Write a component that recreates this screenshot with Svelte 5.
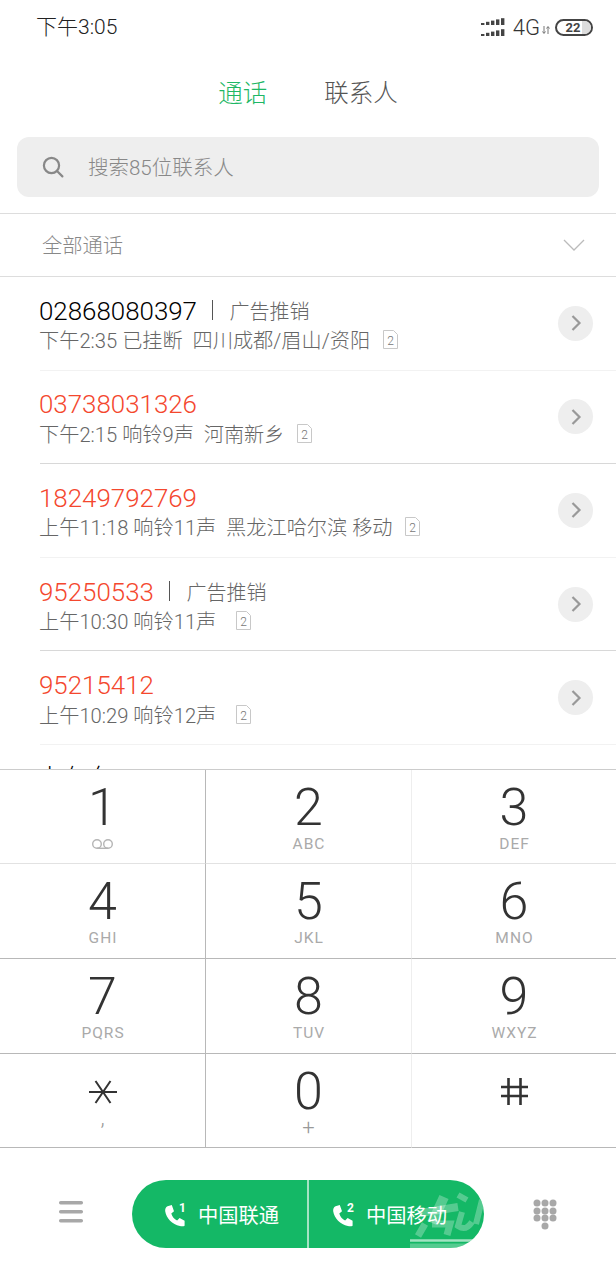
<script>
	const calls = [
		{ num: '02868080397', tag: '广告推销', info: '下午2:35 已挂断  四川成都/眉山/资阳', gap: 12, line: 'faint' },
		{ num: '03738031326', missed: true, info: '下午2:15 响铃9声  河南新乡', gap: 12, line: 'dark' },
		{ num: '18249792769', missed: true, info: '上午11:18 响铃11声  黑龙江哈尔滨 移动', gap: 11, line: 'faint' },
		{ num: '95250533', missed: true, tag: '广告推销', info: '上午10:30 响铃11声', gap: 19, line: 'dark' },
		{ num: '95215412', missed: true, info: '上午10:29 响铃12声', gap: 19, line: 'faint' }
	];

	const keys = [
		{ d: '1', voicemail: true },
		{ d: '2', sub: 'ABC' },
		{ d: '3', sub: 'DEF' },
		{ d: '4', sub: 'GHI' },
		{ d: '5', sub: 'JKL' },
		{ d: '6', sub: 'MNO' },
		{ d: '7', sub: 'PQRS' },
		{ d: '8', sub: 'TUV' },
		{ d: '9', sub: 'WXYZ' },
		{ star: true, sub: ',', big: true },
		{ d: '0', sub: '+', big: true },
		{ hash: true }
	];

	const signal = [0, 1, 2, 3, 4];
	const dots = [
		[4, 4], [12, 4], [20, 4],
		[4, 12], [12, 12], [20, 12],
		[4, 19], [12, 19], [20, 19],
		[12, 27]
	];
	const handset = 'M4.500 3.200 8.800 2l2.200 6.200-2.700 2.200c.9 3.200 2.900 5.600 5.800 7l2.500-2.300 5 2.600v5c-1.100.6-2.800.7-4.700.3C9.300 21.600 3.200 15.300 2.200 8.300 1.900 6 2.800 4 4.500 3.200z';
</script>

<div class="page">
	<header class="status">
		<span class="time">下午3:05</span>
		<div class="status-right">
			<svg class="signal" width="24" height="18" viewBox="0 0 24 18" fill="#444">
				{#each signal as i}
					<rect x={i * 5} y={5 - i * 1.2} width="3.4" height={2 + i * 1.2} />
					<rect x={i * 5} y={16 - i * 1.2} width="3.4" height={2 + i * 1.2} />
				{/each}
			</svg>
			<span class="net">4G</span>
			<svg class="updown" width="8" height="10" viewBox="0 0 8 10" fill="none" stroke="#777" stroke-width="1">
				<path d="M2 1v7M0.5 6.5 2 8.5 3.5 6.5M6 9V2M4.5 3.5 6 1.5 7.5 3.5" />
			</svg>
			<div class="battery">
				<span class="level"></span>
				<span class="pct">22</span>
			</div>
		</div>
	</header>

	<nav class="tabs">
		<span class="tab active">通话</span>
		<span class="tab">联系人</span>
	</nav>

	<div class="search">
		<svg width="24" height="24" viewBox="0 0 24 24" fill="none" stroke="#888" stroke-width="2.2">
			<circle cx="10.5" cy="10.5" r="7.6" />
			<path d="M16 16l5.4 5.4" stroke-linecap="round" />
		</svg>
		<span>搜索85位联系人</span>
	</div>

	<div class="filter">
		<span>全部通话</span>
		<svg width="22" height="12" viewBox="0 0 22 12" fill="none" stroke="#bbb" stroke-width="1.3">
			<path d="M1 1l10 10L21 1" />
		</svg>
	</div>

	<ul class="calls">
		{#each calls as c}
			<li class="call {c.line}">
				<div class="call-text">
					<div class="top">
						<span class="num" class:missed={c.missed}>{c.num}</span>
						{#if c.tag}
							<i class="sep"></i>
							<span class="tag">{c.tag}</span>
						{/if}
					</div>
					<div class="info">
						<span>{c.info}</span>
						<svg style="margin-left: {c.gap}px" class="sim" width="17" height="19" viewBox="0 0 17 19">
							<path d="M1.500.5h10l4 4v14h-14z" fill="none" stroke="#c8c8c8" />
							<text x="8.500" y="14.500" text-anchor="middle" font-size="12" fill="#777" font-family="Roboto, sans-serif">2</text>
						</svg>
					</div>
				</div>
				<div class="more">
					<svg width="12" height="18" viewBox="0 0 12 18" fill="none" stroke="#999" stroke-width="2.2">
						<path d="M2.500 2l7 7-7 7" />
					</svg>
				</div>
			</li>
		{/each}
		<li class="call peek">
			<div class="call-text">
				<div class="top"><span class="num">卜午年</span></div>
			</div>
		</li>
	</ul>

	<section class="keypad">
		{#each keys as k, i}
			<div class="key row{Math.floor(i / 3)} col{i % 3}">
				{#if k.star}
					<svg class="sym star" width="28" height="24" viewBox="0 0 28 24" stroke="#333" stroke-width="2" fill="none" role="img" aria-label="*">
						<path d="M0 12h28M6.500 1l15 22M21.500 1l-15 22" />
					</svg>
				{:else if k.hash}
					<svg class="sym hash" width="27" height="27" viewBox="0 0 27 27" stroke="#333" stroke-width="2.600" fill="none" role="img" aria-label="#">
						<path d="M0 9h27M0 18h27M7.500 0v27M19.500 0v27" />
					</svg>
				{:else}
					<span class="digit">{k.d}</span>
				{/if}
				{#if k.voicemail}
					<svg class="vm" width="23" height="12" viewBox="0 0 23 12" fill="none" stroke="#b5b5b5" stroke-width="1.4">
						<circle cx="6" cy="6" r="4.300" />
						<circle cx="17" cy="6" r="4.300" />
						<path d="M6 10.300h11" />
					</svg>
				{:else if k.sub}
					<span class="sub" class:big={k.big}>{k.sub}</span>
				{/if}
			</div>
		{/each}
	</section>

	<footer class="bottom">
		<svg class="menu" width="24" height="22" viewBox="0 0 24 22" fill="#a8a8a8">
			<rect width="24" height="3.400" rx="1.600" />
			<rect y="9" width="24" height="3.400" rx="1.600" />
			<rect y="18" width="24" height="3.400" rx="1.600" />
		</svg>

		<div class="dial">
			<button class="sim-btn first">
				<svg width="24" height="30" viewBox="0 -4 24 30">
					<path d={handset} fill="#fff" />
					<text x="19.500" y="9" text-anchor="middle" font-size="12" font-weight="700" fill="#fff" font-family="Roboto, sans-serif">1</text>
				</svg>
				<span>中国联通</span>
			</button>
			<button class="sim-btn second">
				<svg width="24" height="30" viewBox="0 -4 24 30">
					<path d={handset} fill="#fff" />
					<text x="19.500" y="9" text-anchor="middle" font-size="12" font-weight="700" fill="#fff" font-family="Roboto, sans-serif">2</text>
				</svg>
				<span>中国移动</span>
			</button>
			<svg class="mark" width="74" height="68" viewBox="0 0 74 68" fill="none" stroke="#fff" stroke-opacity="0.28">
				<path d="M34 17 22 43" stroke-width="10" />
				<path d="M10 33 48 27" stroke-width="8" />
				<path d="M22 44h18l-3 11M15 44 8 56" stroke-width="7" />
				<path d="M48 15l9 5M52 32l-4 14c6 4 10 2 14-4M72 20 66 44" stroke-width="6" />
				<path d="M0 60.500h74" stroke-width="2.500" stroke-opacity="0.6" />
				<path d="M0 66h64" stroke-width="5" />
			</svg>
		</div>

		<svg class="dots" width="24" height="31" viewBox="0 0 24 31" fill="#a8a8a8">
			{#each dots as [x, y]}
				<circle cx={x} cy={y} r="3.500" />
			{/each}
		</svg>
	</footer>
</div>

<style>
	:global(body) {
		margin: 0;
		background: #fff;
		font-family: Roboto, 'Noto Sans CJK SC', sans-serif;
	}

	.page {
		width: 616px;
		height: 1280px;
		display: flex;
		flex-direction: column;
		overflow: hidden;
		background: #fff;
	}

	.status {
		height: 54px;
		padding: 0 23px 0 36px;
		display: flex;
		align-items: center;
		justify-content: space-between;
		box-sizing: border-box;
		flex: none;
	}

	.time {
		font-size: 21px;
		font-weight: 300;
		line-height: 50px;
		color: #222;
	}

	.status-right {
		display: flex;
		align-items: center;
	}

	.net {
		font-size: 22px;
		font-weight: 300;
		color: #333;
		margin-left: 8px;
	}

	.updown {
		margin: 6px 5px 0 2px;
	}

	.battery {
		position: relative;
		width: 38px;
		height: 17px;
		border: 2px solid #444;
		border-radius: 9px;
		box-sizing: border-box;
		display: flex;
		align-items: center;
		justify-content: center;
		overflow: hidden;
	}

	.level {
		position: absolute;
		right: 0;
		top: 0;
		bottom: 0;
		width: 9px;
		background: #ddd;
	}

	.pct {
		position: relative;
		font-size: 13px;
		font-weight: 700;
		color: #444;
		margin-right: 2px;
	}

	.tabs {
		height: 83px;
		flex: none;
		display: flex;
		justify-content: center;
		align-items: flex-start;
		gap: 57px;
	}

	.tab {
		font-size: 24.500px;
		font-weight: 300;
		line-height: 80px;
		color: #555;
	}

	.tab.active {
		color: #1eb765;
	}

	.search {
		height: 60px;
		margin: 0 17px;
		padding-left: 24px;
		border-radius: 12px;
		background: #eee;
		display: flex;
		align-items: center;
		gap: 23px;
		flex: none;
		font-size: 20.500px;
		font-weight: 300;
		color: #888;
	}

	.search span {
		margin-top: -2px;
	}

	.filter {
		margin-top: 16px;
		height: 64px;
		box-sizing: border-box;
		border-top: 1px solid #ddd;
		border-bottom: 1px solid #ddd;
		padding: 0 31px 0 42px;
		display: flex;
		align-items: center;
		justify-content: space-between;
		font-size: 20.300px;
		font-weight: 300;
		color: #888;
		flex: none;
	}

	.filter span {
		margin-top: -2px;
	}

	.calls {
		list-style: none;
		margin: 0;
		padding: 0;
		flex: 1;
		min-height: 0;
		overflow: hidden;
	}

	.call {
		height: 93.600px;
		box-sizing: border-box;
		margin-left: 40px;
		padding-right: 23px;
		display: flex;
		align-items: center;
		justify-content: space-between;
		border-bottom: 1px solid #f2f2f2;
	}

	.call.dark {
		border-bottom-color: #d8d8d8;
	}

	.call.peek {
		border: 0;
		align-items: flex-start;
		padding-top: 14px;
	}

	.call-text {
		display: flex;
		flex-direction: column;
		margin-left: -1px;
	}

	.top {
		display: flex;
		align-items: center;
		height: 33px;
		margin-top: 1px;
	}

	.num {
		font-size: 25.900px;
		font-weight: 300;
		color: #000;
	}

	.num.missed {
		color: #f4472e;
	}

	.sep {
		width: 1.500px;
		height: 20px;
		background: #555;
		margin: 0 16px 2px 15px;
	}

	.tag {
		font-size: 20px;
		font-weight: 300;
		color: #666;
	}

	.info {
		display: flex;
		align-items: center;
		height: 27px;
		margin-top: -1px;
		font-size: 20.200px;
		font-weight: 300;
		color: #666;
		white-space: pre;
	}

	.more {
		width: 35px;
		height: 35px;
		border-radius: 50%;
		background: #eee;
		display: flex;
		align-items: center;
		justify-content: center;
	}

	.keypad {
		flex: none;
		display: grid;
		grid-template-columns: 206px 206px 204px;
		grid-template-rows: 94px 95px 95px 94px;
		height: 379px;
		background: #fff;
		border-top: 1px solid #ccc;
		box-sizing: border-box;
	}

	.key {
		display: flex;
		flex-direction: column;
		align-items: center;
		box-sizing: border-box;
		border-bottom: 1px solid #b8b8b8;
	}

	.key.row0 {
		border-bottom-color: #e2e2e2;
	}

	.key.col0 {
		border-right: 1px solid #b8b8b8;
	}

	.key.col1 {
		border-right: 1px solid #eee;
	}

	.digit {
		font-size: 52px;
		font-weight: 300;
		line-height: 60px;
		margin-top: 8px;
		color: #333;
	}

	.sub {
		font-size: 15.500px;
		letter-spacing: 1px;
		line-height: 18px;
		margin: -3px 0 0 1px;
		color: #aaa;
	}

	.sub.big {
		font-size: 22px;
		font-weight: 300;
		line-height: 22px;
		margin-top: -5px;
		color: #999;
	}

	.sym.star {
		margin-top: 26px;
		margin-bottom: 8px;
	}

	.sym.hash {
		margin-top: 24px;
	}

	.bottom {
		flex: none;
		height: 132px;
		box-sizing: border-box;
		display: flex;
		align-items: center;
		justify-content: space-between;
		padding: 0 59px;
	}

	.menu {
		margin-bottom: 4px;
	}

	.dial {
		position: relative;
		width: 352px;
		height: 68px;
		border-radius: 34px;
		overflow: hidden;
		background: #14b866;
		display: flex;
	}

	.sim-btn {
		border: 0;
		background: none;
		color: #fff;
		font: inherit;
		font-size: 20.300px;
		display: flex;
		align-items: center;
		gap: 11px;
	}

	.sim-btn.first {
		width: 175px;
		flex: none;
		padding: 0 0 0 31px;
	}

	.sim-btn.second {
		flex: 1;
		padding: 0 0 0 22px;
		border-left: 2px solid #a5e3c4;
	}

	.mark {
		position: absolute;
		right: 0;
		bottom: 0;
		pointer-events: none;
	}
</style>
